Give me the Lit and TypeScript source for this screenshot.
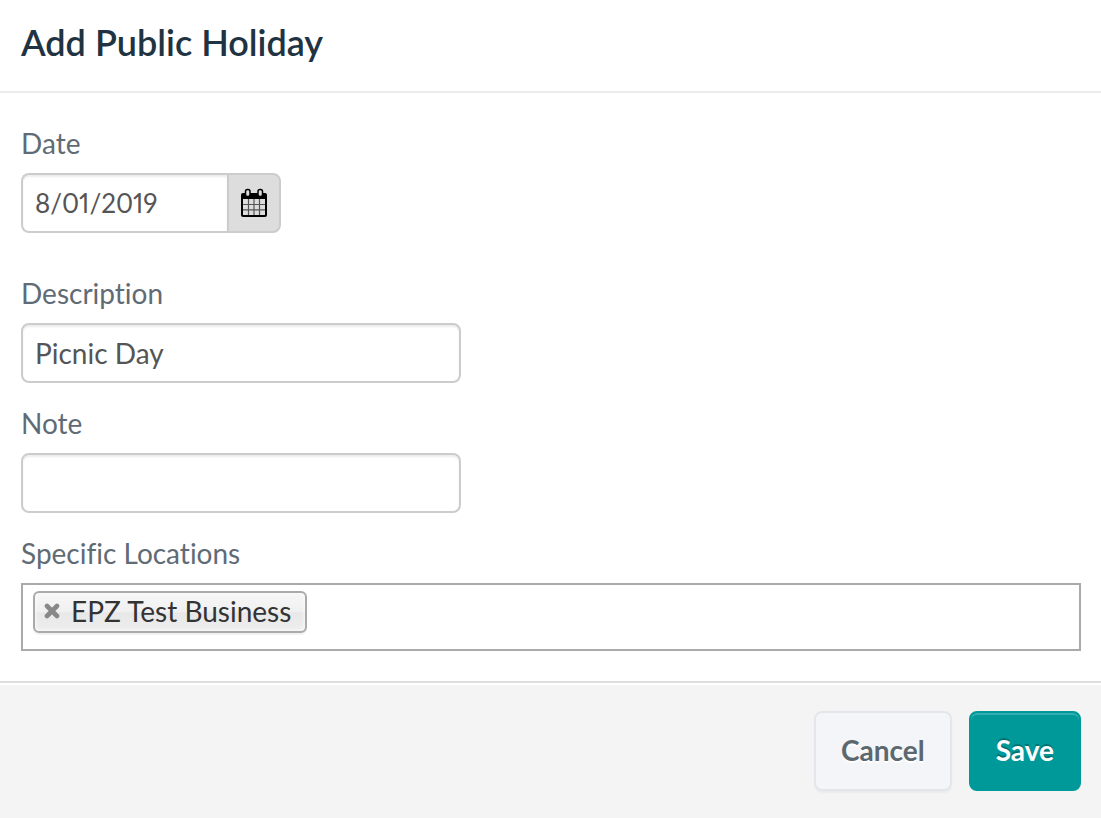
import { LitElement, html, svg, css } from "lit";
import { customElement, state } from "lit/decorators.js";

const calendarIcon = svg`
  <svg class="calendar" viewBox="0 0 28 30" width="28" height="30" aria-hidden="true">
    <rect x="1" y="5" width="26" height="24" rx="2" fill="#000" />
    <path fill="#ddd" d="M3 11h22v16H3z" />
    <path fill="none" stroke="#555" stroke-width="1.2" d="M8.5 11v16M14 11v16M19.5 11v16M3 16.5h22M3 21.8h22" />
    <rect x="5.5" y="1.5" width="4.5" height="7" rx="2" fill="#ddd" stroke="#000" stroke-width="1.5" />
    <rect x="18" y="1.5" width="4.5" height="7" rx="2" fill="#ddd" stroke="#000" stroke-width="1.5" />
  </svg>`;

const removeIcon = svg`
  <svg class="cross" viewBox="0 0 16 16" width="16" height="16" aria-hidden="true">
    <path d="M3 3l10 10M13 3L3 13" stroke="#888" stroke-width="4.6" stroke-linecap="round" />
  </svg>`;

@customElement("app-root")
export class AppRoot extends LitElement {
  @state() private locations = ["EPZ Test Business"];

  static styles = css`
    :host {
      display: flex;
      flex-direction: column;
      min-height: 100vh;
      background: #fff;
      font-family: Lato, "Open Sans", sans-serif;
      font-size: 28px;
      font-variant-ligatures: none;
      color: #5f6b75;
    }
    * {
      box-sizing: border-box;
    }
    .header {
      padding: 18px 21px 25px;
      border-bottom: 2px solid #ececec;
    }
    .title {
      margin: 0;
      font-size: 36px;
      line-height: 48px;
      font-weight: 600;
      color: #1f3342;
    }
    .form {
      display: flex;
      flex-direction: column;
      flex: 1;
    }
    .body {
      display: flex;
      flex-direction: column;
      gap: 21px;
      padding: 31px 20px 30px 21px;
    }
    .field {
      display: flex;
      flex-direction: column;
      align-items: flex-start;
      gap: 10px;
    }
    .date {
      margin-bottom: 20px;
    }
    .label {
      line-height: 39px;
    }
    .input {
      width: 100%;
      max-width: 440px;
      height: 60px;
      padding: 0 12px;
      border: 2px solid #ccc;
      border-radius: 8px;
      background: #fff;
      box-shadow: inset 0 2px 2px rgba(0, 0, 0, 0.075);
      font: inherit;
      font-variant-ligatures: none;
      font-variant-numeric: proportional-nums;
      color: #555;
    }
    .group {
      display: flex;
      width: 100%;
      max-width: 260px;
    }
    .group .input {
      flex: 1;
      min-width: 0;
      border-right: 0;
      border-radius: 8px 0 0 8px;
      font-size: 26px;
    }
    .picker {
      display: flex;
      align-items: center;
      justify-content: center;
      width: 54px;
      padding: 0;
      border: 2px solid #ccc;
      border-radius: 0 8px 8px 0;
      background: #ddd;
    }
    .locations {
      display: flex;
      flex-wrap: wrap;
      align-items: flex-start;
      width: 100%;
      min-height: 68px;
      padding: 6px 10px;
      border: 2px solid #aaa;
    }
    .tag {
      display: flex;
      align-items: center;
      gap: 11px;
      height: 42px;
      padding: 0 14px 2px 9px;
      border: 2px solid #aaa;
      border-radius: 6px;
      background: linear-gradient(#f4f4f4 20%, #f0f0f0 50%, #e8e8e8 52%, #eee);
      box-shadow: inset 0 0 4px #fff, 0 2px 0 rgba(0, 0, 0, 0.05);
      color: #333;
    }
    .remove {
      display: flex;
      padding: 0;
      border: 0;
      background: none;
    }
    .search {
      flex: 1;
      min-width: 0;
      height: 42px;
      padding: 0 8px;
      border: 0;
      outline: 0;
      background: none;
      font: inherit;
    }
    .footer {
      display: flex;
      flex: 1;
      justify-content: flex-end;
      align-items: flex-start;
      gap: 17px;
      padding: 28px 20px 27px;
      border-top: 2px solid #ddd;
      background: #f4f4f4;
      box-shadow: inset 0 2px 0 #fff;
    }
    .button {
      height: 80px;
      padding: 0 25px 2px;
      border: 2px solid #e3e7eb;
      border-radius: 8px;
      background: #f4f5f8;
      box-shadow: 0 2px 2px rgba(0, 0, 0, 0.04);
      font: inherit;
      font-weight: 700;
      color: #5b6870;
      text-shadow: 0 2px 0 #fff;
    }
    .save {
      border-color: #009999;
      background: #009999;
      box-shadow: inset 0 2px 0 rgba(255, 255, 255, 0.2);
      color: #fff;
      text-shadow: 0 -2px 0 rgba(0, 0, 0, 0.25);
    }
  `;

  private remove(name: string) {
    this.locations = this.locations.filter((item) => item !== name);
  }

  render() {
    return html`
      <header class="header"><h1 class="title">Add Public Holiday</h1></header>
      <form class="form" @submit=${(e: Event) => e.preventDefault()}>
        <div class="body">
          <div class="field date">
            <label class="label" for="date">Date</label>
            <div class="group">
              <input class="input" id="date" type="text" value="8/01/2019" />
              <button class="picker" type="button" aria-label="Choose date">${calendarIcon}</button>
            </div>
          </div>
          <div class="field">
            <label class="label" for="description">Description</label>
            <input class="input" id="description" type="text" value="Picnic Day" />
          </div>
          <div class="field">
            <label class="label" for="note">Note</label>
            <input class="input" id="note" type="text" />
          </div>
          <div class="field">
            <label class="label" for="locations">Specific Locations</label>
            <div class="locations">
              ${this.locations.map(
                (name) => html`
                  <span class="tag">
                    <button class="remove" type="button" aria-label="Remove" @click=${() => this.remove(name)}>
                      ${removeIcon}
                    </button>
                    <span>${name}</span>
                  </span>
                `
              )}
              <input class="search" id="locations" type="text" />
            </div>
          </div>
        </div>
        <footer class="footer">
          <button class="button" type="button">Cancel</button>
          <button class="button save" type="submit">Save</button>
        </footer>
      </form>
    `;
  }
}
